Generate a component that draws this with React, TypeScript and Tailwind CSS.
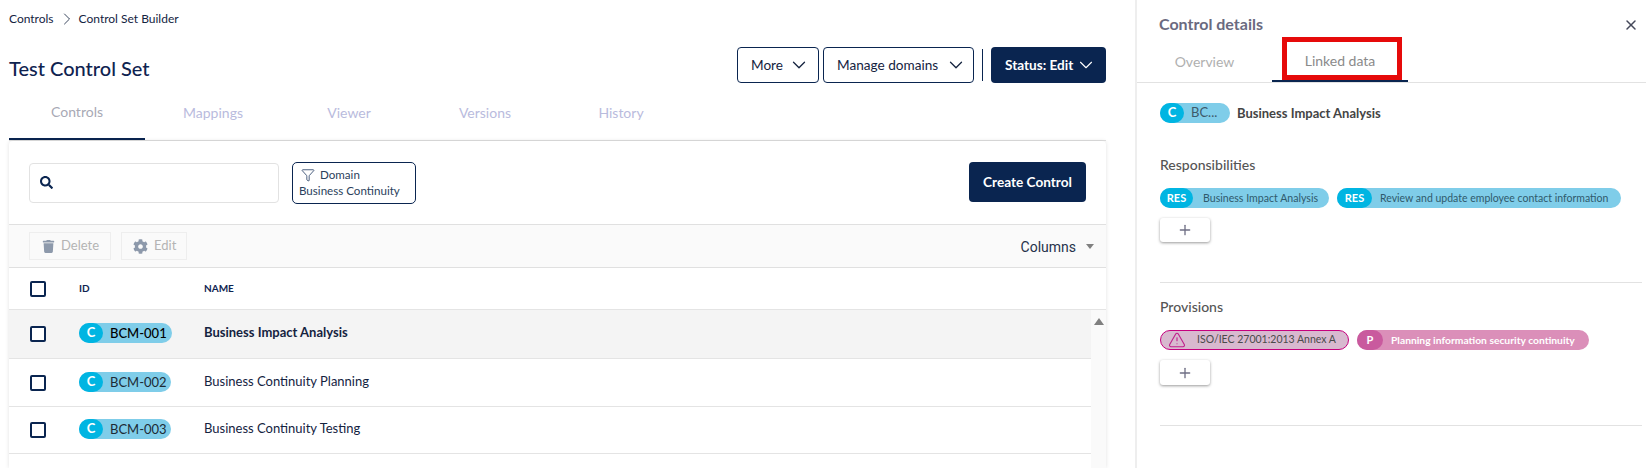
import { ChevronDown, ChevronRight, Funnel, Plus, TriangleAlert, X } from "lucide-react";
import { FaCog, FaSearch, FaTrash } from "react-icons/fa";

function Pill({ id, bold }: { id: string; bold?: boolean }) {
  return (
    <div className={`mb-[2px] flex h-5 items-center rounded-full bg-[#7fcde9] ${bold ? "w-[93px]" : "w-[92px]"}`}>
      <span className="flex h-5 w-6 items-center justify-center rounded-full bg-[#00b5e2] text-[13px] font-bold text-white">C</span>
      <span className={`ml-[7px] text-[13px] leading-5 ${bold ? "font-medium text-black" : "text-[#1c2b36]"}`}>{id}</span>
    </div>
  );
}

function Checkbox() {
  return <span className="block h-4 w-4 rounded-[2px] border-2 border-[#0a2550] bg-white" />;
}

function Row({ id, name, selected, h }: { id: string; name: string; selected?: boolean; h: string }) {
  return (
    <div className={`grid grid-cols-[70px_125px_1fr] items-center border-b border-[#e4e4e4] ${h} ${selected ? "bg-[#f4f4f4]" : "bg-white"}`}>
      <div className="pl-[21px]"><Checkbox /></div>
      <Pill id={id} bold={selected} />
      <span className={`mb-[2px] text-[13px] text-[#14233f] ${selected ? "font-bold" : ""}`}>{name}</span>
    </div>
  );
}

function Chip({ tag, text, wrap, circle, txt, gap }: { tag: string; text: string; wrap: string; circle: string; txt: string; gap: string }) {
  return (
    <div className={`flex h-5 items-center rounded-full ${wrap}`}>
      <span className={`flex h-5 shrink-0 items-center justify-center rounded-full text-[11px] font-bold text-white ${circle}`}>{tag}</span>
      <span className={`whitespace-nowrap leading-5 ${gap} ${txt}`}>{text}</span>
    </div>
  );
}

function AddButton({ h }: { h: string }) {
  return (
    <button className={`mt-[10px] flex w-[50px] items-center justify-center rounded-[3px] bg-white shadow-[0_1px_3px_rgba(0,0,0,0.4)] ${h}`}>
      <Plus size={16} strokeWidth={2} className="text-[#6f6f85]" />
    </button>
  );
}

export default function App() {
  const tabs = ["Mappings", "Viewer", "Versions", "History"];
  return (
    <div className="flex h-[468px] w-[1646px] overflow-hidden bg-white font-[Lato,sans-serif]">
      <div className="flex h-full w-[1135px] shrink-0 flex-col pl-[9px] pr-[29px]">
        <nav className="flex h-[38px] items-center text-[12px] text-[#14233f]">
          <span>Controls</span>
          <ChevronRight size={20} strokeWidth={1} className="ml-[3px] mr-[2px]" />
          <span>Control Set Builder</span>
        </nav>

        <div className="mt-[9px] flex h-9 items-center justify-between">
          <h1 className="pt-[6px] text-[20px] font-medium text-[#0f2350]">Test Control Set</h1>
          <div className="flex items-center text-[13.6px]">
            <button className="flex h-9 w-[82px] items-center rounded-[4px] border border-[#0a2550] pl-[13px] text-[#14233f]">
              More <ChevronDown size={22} strokeWidth={1.4} className="ml-[5px]" />
            </button>
            <button className="ml-1 flex h-9 w-[151px] items-center rounded-[4px] border border-[#0a2550] pl-[13px] text-[#14233f]">
              Manage domains <ChevronDown size={22} strokeWidth={1.4} className="ml-[7px]" />
            </button>
            <span className="ml-2 h-8 w-px bg-[#0a2550]" />
            <button className="ml-2 flex h-9 w-[115px] items-center rounded-[4px] bg-[#0a2550] pl-[14px] font-bold text-white">
              Status: Edit <ChevronDown size={22} strokeWidth={1.2} className="ml-[2px]" />
            </button>
          </div>
        </div>

        <div className="flex h-[58px] border-b border-[#e0e0e0] text-[14px]">
          <div className="flex h-[57px] w-[136px] items-center justify-center border-b-2 border-[#0a2550] pt-[1px] text-[#a8a9b5]">Controls</div>
          {tabs.map((t) => (
            <div key={t} className="flex h-[57px] w-[136px] items-center justify-center pt-[1px] text-[#b9bbdd]">{t}</div>
          ))}
        </div>

        <div className="flex flex-1 flex-col rounded-t-[4px] shadow-[0_0_4px_rgba(0,0,0,0.12)]">
          <div className="flex h-[84px] shrink-0 items-center border-b border-[#e0e0e0] pl-[20px] pr-[20px]">
            <div className="flex h-[40px] w-[250px] items-center rounded-[4px] border border-[#e2e2e2] pl-[10px]">
              <FaSearch size={13} className="text-[#0a2550]" />
            </div>
            <div className="ml-[13px] flex h-[42px] w-[124px] flex-col justify-center rounded-[5px] border border-[#0a2550] pl-[6px] text-[11.6px] leading-4 text-[#2b3f5c]">
              <div className="flex items-center pl-[2px]">
                <Funnel size={14} strokeWidth={1.25} className="text-[#0a2550]" />
                <span className="ml-[5px]">Domain</span>
              </div>
              <span>Business Continuity</span>
            </div>
            <button className="mb-[1px] ml-auto h-10 w-[117px] rounded-[4px] bg-[#0a2550] text-[13.6px] font-bold text-white">Create Control</button>
          </div>

          <div className="flex h-[43px] shrink-0 items-center border-b border-[#e0e0e0] bg-[#fafafa] pl-[20px] pr-[12px]">
            <button className="flex h-7 w-[82px] items-center border border-[#eeeeee] pl-[12px] text-[13px] text-[#b4b4b4]">
              <FaTrash size={13} className="text-[#8d99ab]" />
              <span className="ml-[6px]">Delete</span>
            </button>
            <button className="ml-[10px] flex h-7 w-[66px] items-center border border-[#eeeeee] pl-[11px] text-[13px] text-[#b4b4b4]">
              <FaCog size={15} className="text-[#8d99ab]" />
              <span className="ml-[6px]">Edit</span>
            </button>
            <span className="ml-auto pt-[2px] font-[Roboto,sans-serif] text-[14px] text-[#26324a]">Columns</span>
            <span className="ml-[10px] h-0 w-0 border-x-[4.5px] border-t-[5px] border-x-transparent border-t-[#808080]" />
          </div>

          <div className="grid h-[42px] shrink-0 grid-cols-[70px_125px_1fr] items-center border-b border-[#e4e4e4] text-[10px] font-bold text-[#0f2350]">
            <div className="pl-[21px]"><Checkbox /></div>
            <span>ID</span>
            <span>NAME</span>
          </div>

          <div className="flex flex-1">
            <div className="flex-1">
              <Row id="BCM-001" name="Business Impact Analysis" selected h="h-[49px]" />
              <Row id="BCM-002" name="Business Continuity Planning" h="h-[48px]" />
              <Row id="BCM-003" name="Business Continuity Testing" h="h-[47px]" />
            </div>
            <div className="flex w-[15px] justify-center bg-[#fafafa] pt-[8px]">
              <span className="h-0 w-0 border-x-[5px] border-b-[7px] border-x-transparent border-b-[#808080]" />
            </div>
          </div>
        </div>
      </div>

      <aside className="flex h-full flex-1 flex-col border-l-2 border-[#eeeeee]">
        <div className="flex h-[41px] justify-between pl-[22px] pr-[7px] pt-[14px]">
          <h2 className="text-[16px] font-bold leading-5 text-[#6a6a80]">Control details</h2>
          <X size={16} strokeWidth={2.25} className="mt-[3px] text-[#44485a]" />
        </div>
        <div className="flex h-[42px] border-b border-[#e2e2e2] text-[14px]">
          <div className="flex h-[41px] w-[135px] items-center justify-center pb-[1px] text-[#b0b0b0]">Overview</div>
          <div className="relative flex h-[41px] w-[136px] items-center justify-center border-b-2 border-[#0a2550] pb-[1px] text-[#8a8a8a]">
            Linked data
            <span className="absolute left-[10px] top-[-4px] h-[43px] w-[120px] border-[5px] border-[#e60a0a]" />
          </div>
        </div>

        <div className="flex flex-col pl-[23px] pr-[4px]">
          <div className="mt-5 flex h-5 items-center">
            <div className="flex h-5 w-[70px] items-center rounded-full bg-[#7fcde9]">
              <span className="flex h-5 w-6 items-center justify-center rounded-full bg-[#00b5e2] text-[13px] font-bold text-white">C</span>
              <span className="ml-[7px] text-[13px] text-[#3d5a6a]">BC...</span>
            </div>
            <span className="ml-[7px] pt-[1px] text-[13px] font-bold text-[#444444]">Business Impact Analysis</span>
          </div>

          <h3 className="mt-8 text-[14px] font-medium leading-5 text-[#555555]">Responsibilities</h3>
          <div className="mt-[13px] flex gap-2">
            <Chip tag="RES" text="Business Impact Analysis" wrap="w-[169px] bg-[#7fcde9]" circle="w-[33px] bg-[#00b5e2]" gap="ml-[10px] text-[10.6px]" txt="text-[#2f5a6c]" />
            <Chip tag="RES" text="Review and update employee contact information" wrap="w-[284px] bg-[#7fcde9]" circle="w-[35px] bg-[#00b5e2]" gap="ml-[8px] text-[10.5px]" txt="text-[#2f5a6c]" />
          </div>
          <AddButton h="h-6" />
          <div className="mt-10 border-b border-[#e2e2e2]" />

          <h3 className="mt-[14px] text-[14px] font-medium leading-5 text-[#555555]">Provisions</h3>
          <div className="mt-[13px] flex gap-2">
            <div className="flex h-5 w-[189px] items-center rounded-full border border-[#c6007e] bg-[#d8b9cf] pl-[7px]">
              <TriangleAlert size={18} strokeWidth={1.5} className="text-[#c0208c]" />
              <span className="ml-[11px] whitespace-nowrap text-[10.5px] text-[#4a4a4a]">ISO/IEC 27001:2013 Annex A</span>
            </div>
            <Chip tag="P" text="Planning information security continuity" wrap="w-[232px] bg-[#db8fb9]" circle="w-[26px] bg-[#c95a9e]" gap="ml-[8px] text-[10.3px] font-bold" txt="text-white" />
          </div>
          <AddButton h="h-[25px]" />
          <div className="mt-10 border-b border-[#e2e2e2]" />
        </div>
      </aside>
    </div>
  );
}
